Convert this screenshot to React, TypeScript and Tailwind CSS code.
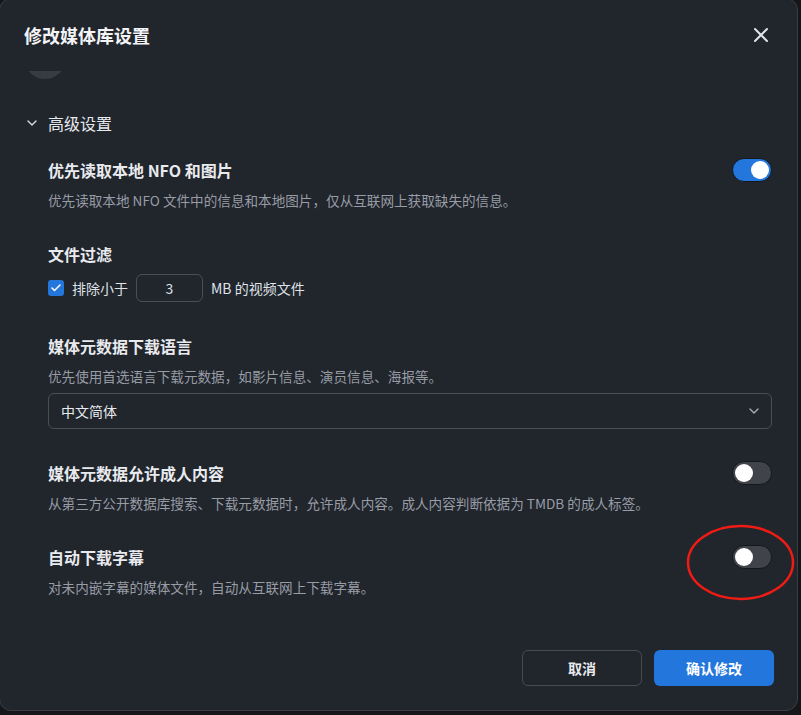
import { Check, ChevronDown, X } from 'lucide-react';

function Toggle({ on }: { on: boolean }) {
  return (
    <div
      className={`flex h-6 w-10 shrink-0 items-center rounded-full border border-[#15171b] px-[2px] ${
        on ? 'justify-end bg-[#2376dc]' : 'justify-start bg-[#404349]'
      }`}
    >
      <div className="h-[18px] w-[18px] rounded-full bg-white" />
    </div>
  );
}

function SwitchItem({ title, desc, on }: { title: string; desc: string; on: boolean }) {
  return (
    <div className="flex items-start justify-between">
      <div>
        <div className="h-6 text-base leading-6 font-semibold text-[#e8eaee]">{title}</div>
        <div className="mt-2 text-[13.6px] leading-5 text-[#979ca5]">{desc}</div>
      </div>
      <Toggle on={on} />
    </div>
  );
}

export default function App() {
  return (
    <div
      className="h-[715px] w-[801px] overflow-hidden bg-[#141619]"
      style={{ fontFamily: '"Noto Sans CJK SC", "Noto Sans", sans-serif' }}
    >
      <div className="relative -mt-[2px] -ml-px flex h-[713px] w-[799px] flex-col rounded-xl border border-[#3a3d43] bg-[#21252c]">
        {/* Header */}
        <div className="flex h-[72px] shrink-0 items-center justify-between pr-[24px] pl-6">
          <h1 className="text-lg leading-7 font-bold text-[#f2f4f7]">修改媒体库设置</h1>
          <X size={24} strokeWidth={2} className="text-[#dfe3e8]" />
        </div>

        {/* Scroll area */}
        <div className="flex-1 overflow-hidden pr-[25px] pl-6">
          <div className="h-2 overflow-hidden">
            <div className="-mt-[34px] h-[42px] w-[42px] rounded-full bg-[#383b41]" />
          </div>

          <div className="mt-8 flex h-6 items-center gap-2">
            <ChevronDown size={16} strokeWidth={2} className="text-[#d9dde3]" />
            <span className="text-base leading-6 text-[#e8eaee]">高级设置</span>
          </div>

          <div className="mt-[23px] space-y-8 pl-6">
            <SwitchItem
              title="优先读取本地 NFO 和图片"
              desc="优先读取本地 NFO 文件中的信息和本地图片，仅从互联网上获取缺失的信息。"
              on
            />

            <div>
              <div className="h-6 text-base leading-6 font-semibold text-[#e8eaee]">文件过滤</div>
              <div className="mt-2 flex h-7 items-center text-sm text-[#dfe2e7]">
                <div className="flex h-4 w-4 items-center justify-center rounded-[3px] bg-[#2376dc]">
                  <Check size={12} strokeWidth={3} className="text-white" />
                </div>
                <span className="ml-2">排除小于</span>
                <div className="ml-2 flex h-7 w-[67px] items-center justify-center rounded-md border border-[#4a4e56]">
                  3
                </div>
                <span className="ml-2">MB 的视频文件</span>
              </div>
            </div>

            <div>
              <div className="h-6 text-base leading-6 font-semibold text-[#e8eaee]">媒体元数据下载语言</div>
              <div className="mt-2 text-[13.6px] leading-5 text-[#979ca5]">
                优先使用首选语言下载元数据，如影片信息、演员信息、海报等。
              </div>
              <div className="mt-[7px] flex h-9 items-center justify-between rounded-md border border-[#4a4e56] pr-[9px] pl-3 text-sm text-[#e8eaee]">
                <span>中文简体</span>
                <ChevronDown size={16} strokeWidth={2} className="text-[#a9aeb6]" />
              </div>
            </div>

            <SwitchItem
              title="媒体元数据允许成人内容"
              desc="从第三方公开数据库搜索、下载元数据时，允许成人内容。成人内容判断依据为 TMDB 的成人标签。"
              on={false}
            />

            <SwitchItem
              title="自动下载字幕"
              desc="对未内嵌字幕的媒体文件，自动从互联网上下载字幕。"
              on={false}
            />
          </div>
        </div>

        {/* Footer */}
        <div className="flex shrink-0 justify-end gap-3 pr-[23px] pb-6 pl-6">
          <button className="h-9 w-[120px] rounded-md border border-[#464a52] text-sm font-semibold text-[#e8eaee]">
            取消
          </button>
          <button className="h-9 w-[120px] rounded-md bg-[#2376dc] text-sm font-semibold text-white">
            确认修改
          </button>
        </div>

        {/* annotation */}
        <svg className="pointer-events-none absolute top-[525px] left-[686px]" width="109" height="77" viewBox="0 0 109 77">
          <ellipse cx="54.5" cy="38.5" rx="52.5" ry="36.5" fill="none" stroke="#ee1c14" strokeWidth="2.5" />
        </svg>
      </div>
    </div>
  );
}
